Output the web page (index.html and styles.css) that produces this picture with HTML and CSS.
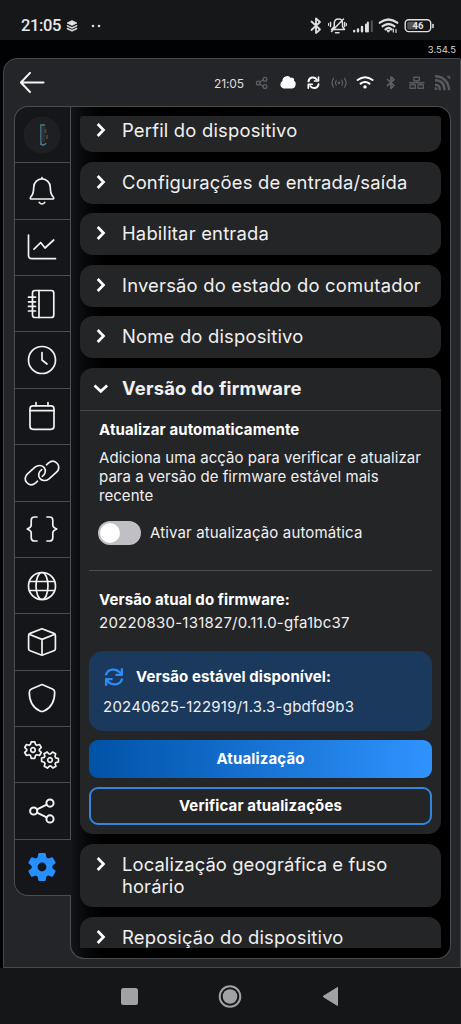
FILE: index.html
```html
<!DOCTYPE html>
<html lang="pt">
<head>
<meta charset="utf-8">
<title>Definições do dispositivo</title>
<link rel="stylesheet" href="styles.css">
</head>
<body>
<div class="phone">
  <header class="status">
    <span class="status-time">21:05</span>
    <svg class="layers" width="12" height="12" viewBox="0 0 12 12"><path d="M6 .6 11 3 6 5.400 1 3z M1 5.300 6 7.500 11 5.300 11 6 6 8.400 1 6z M1 8 6 10.200 11 8 11 8.900 6 11.300 1 8.900z" fill="#e4e4e4" stroke="#e4e4e4" stroke-width=".7" stroke-linejoin="round"/></svg>
    <svg class="dots" width="12" height="4" viewBox="0 0 12 4"><circle cx="2" cy="2" r="1.300" fill="#ddd"/><circle cx="8" cy="2" r="1.300" fill="#ddd"/></svg>
    <svg class="status-icons" width="130" height="20" viewBox="308 16 130 20" fill="none" stroke="#dedede" stroke-linecap="round" stroke-linejoin="round">
      <path d="M311.500 21.500 320 29.500 316 33V18.500l4 3.500-8.500 8" stroke-width="1.800"/>
      <path d="M331.500 29.500h13l-2-3v-3.500c0-5.500-8-5.500-8.200 0v3.500zM335.500 32.800h3.500M331.500 31.500 343.500 19M330.500 22.500v4M344.700 22.500v4" stroke-width="1.500"/>
      <path d="M328.500 23.500v2M346.500 23.500v2" stroke-width="1"/>
      <path d="M354.200 31v.200M358 29.500v1.800M362 27v4.300M366.200 24.800v6.500" stroke-width="2.400"/><path d="M367.900 22.500v9" stroke-width="2"/><path d="M371.800 20.500v11.500" stroke="#555" stroke-width="2" stroke-linecap="butt"/>
      <path d="M379.800 22.700q8.700-6.500 17.400 0M382.700 26.200q5.800-4.500 11.600 0M385.500 29.300q3-2.500 6 0" stroke-width="2.300"/>
      <path d="M387.300 30.500h2.600l-1.300 1.500z" fill="#dedede" stroke-width="1"/>
      <path d="M393.300 32v-3M396 29.500v3" stroke-width="1.200"/>
      <rect x="405.200" y="19.800" width="25.500" height="11.800" rx="3.500" stroke-width="1.400"/>
      <rect x="407.300" y="21.800" width="10" height="7.800" rx="1.500" fill="#555" stroke="none"/>
      <path d="M433 24.500v3" stroke-width="1.600"/>
      <text x="418" y="29" text-anchor="middle" class="battery">46</text>
    </svg>
  </header>
  <div class="version">3.54.5</div>

  <main class="panel">
    <div class="topbar">
      <svg width="26" height="22" viewBox="0 0 26 22" fill="none" stroke="#f5f5f5" stroke-width="2" stroke-linecap="round" stroke-linejoin="round"><path d="M23.500 10.500H.9M10 .9.900 10.500 10 20"/></svg>
      <div class="indicators">
        <span class="clock">21:05</span>
        <svg width="198" height="20" viewBox="254 73 198 20" fill="none" stroke-linecap="round" stroke-linejoin="round">
          <g stroke="#5f6063" stroke-width="1.300"><path d="m259.500 82 4-2.200M259.500 84l4 2.200"/><circle cx="258.300" cy="83" r="1.900"/><circle cx="265" cy="79.200" r="1.900"/><circle cx="265" cy="86.500" r="1.900"/></g>
          <path d="M283.400 88.500a4 4 0 0 1-1-7.400 4.800 4.800 0 0 1 8.500-3.200c2.600-.8 3.800 1.500 3 2.800 2.700.8 2.600 7.300-1.600 7.800z" fill="#fff"/>
          <g stroke="#fff" stroke-width="2"><path d="M308.500 81.300c.7-4.300 6-5 8.200-1.800M318.500 84.300c-.7 4.200-6 5-8.300 1.700"/><path d="M318.500 77v4h-4M308.300 88.300v-4h4" stroke-width="1.600"/></g>
          <g stroke="#606164" stroke-width="1.200"><path d="M336.300 80.200q-1.600 2.500 0 5M341.800 80.200q1.600 2.500 0 5M333.500 78.300q-2.900 4.400 0 8.800M344.600 78.300q2.900 4.400 0 8.800"/><circle cx="339" cy="82.700" r=".7" fill="#606164"/></g>
          <path d="M357.600 80q7.500-5.500 15 0M360.600 83.600q4.400-3.200 8.900 0" stroke="#fff" stroke-width="2"/><circle cx="365" cy="86.900" r="1.700" fill="#fff"/>
          <path d="M387.500 79.500 394 85.500 391 88.300V77l3 2.700-6.500 6" stroke="#5f6063" stroke-width="1.700"/>
          <g stroke="#58595c" stroke-width="1.400"><rect x="413.800" y="77.200" width="5.500" height="3.500"/><rect x="410" y="84.700" width="5.300" height="3.500"/><rect x="418" y="84.700" width="5.300" height="3.500"/><path d="M416.600 80.700v2M409.500 82.700h14.500M412.600 82.700v2M420.600 82.700v2"/></g>
          <g stroke="#58595c" stroke-width="2.400" stroke-linecap="butt"><path d="M435 84.800c4 0 5 2.500 5 5.500M435 80.300c6.500 0 9.500 4 9.500 10M435 76.300c8 0 14 5.500 14 14"/><path d="M435 89.500v-2.200q2 0 2.300 2.300zM447 76.200h2.800V79z" fill="#58595c" stroke-width=".8"/></g>
        </svg>
      </div>
    </div>

    <div class="workspace">
      <nav class="sidebar">
        <div class="tab"><svg width="38" height="38" viewBox="-19 -19 38 38"><circle r="18.500" fill="#1e1f22"/><path d="M3-10h-4V10" fill="none" stroke="#3c6674" stroke-width="2"/><path d="M1.500-8.500V7" stroke="#2b2f34" stroke-width="4"/><path d="M3.500-6V-2M5 0V4" stroke="#5d4438" stroke-width="1.500"/><path d="M-1 9q3 2.500 5-1" fill="none" stroke="#4b8296" stroke-width="1.500"/></svg></div>
        <div class="tab"><svg class="icon" viewBox="-18 -18 36 36"><path d="M-10.500 8H10.500c2.200 0 .8-2 .1-2.900C8.700 2.800 8.300 0 8.300-3.800a8.300 8.300 0 0 0-16.600 0C-8.300 0-8.700 2.800-10.600 5.100-11.300 6-12.700 8-10.500 8zM0-12.100v-1.300M-2.700 11.500q2.700 3 5.400 0"/></svg></div>
        <div class="tab"><svg class="icon" viewBox="-18 -18 36 36"><path d="M-13.500-12V8.200q0 3.500 3.500 3.500H13.500M-8 2.200-1.300-4.500 3 1 11.700-7"/></svg></div>
        <div class="tab"><svg class="icon" viewBox="-18 -18 36 36"><rect x="-9.500" y="-13.500" width="21.300" height="27" rx="2.500"/><path d="M-3-13.500v27M-13.500-6.800h7M-13.500-2.200h7M-13.500 2.400h7M-13.500 7h7"/></svg></div>
        <div class="tab"><svg class="icon" viewBox="-18 -18 36 36"><circle r="13.500"/><path d="M0-7.500V0l5 4"/></svg></div>
        <div class="tab"><svg class="icon" viewBox="-18 -18 36 36"><rect x="-12" y="-10.200" width="24" height="23.500" rx="3"/><path d="M-12-5.300h24M-6-13.500v3.300M6-13.500v3.300"/></svg></div>
        <div class="tab"><svg class="icon" viewBox="-18 -18 36 36"><path id="chain" d="M-4.500 8.200-6.300 9.800C-9.500 12.500-13 12-15.300 9.500S-17.200 3.200-14.500.8L-7-5.800C-4-8.300.3-8 2.300-5.200S3.300 1.300.3 3.400"/><use href="#chain" transform="rotate(180)"/></svg></div>
        <div class="tab"><svg class="icon" viewBox="-18 -18 36 36"><path d="M-5-12H-7.500q-3.300 0-3.300 3.300V-4q0 2.500-4 4 4 1.500 4 4v4.700q0 3.300 3.300 3.300H-5M5-12H7.500q3.300 0 3.300 3.300V-4q0 2.500 4 4-4 1.500-4 4v4.700q0 3.300-3.300 3.300H5"/></svg></div>
        <div class="tab"><svg class="icon" viewBox="-18 -18 36 36"><circle r="13.500"/><ellipse rx="6" ry="13.500"/><path d="M-12.600-4.500h25.200M-12.600 4.500h25.200"/></svg></div>
        <div class="tab"><svg class="icon" viewBox="-18 -18 36 36"><path d="M0-13.300 11.900-8.600q1.500.6 1.500 2V6.800q0 1.400-1.500 2L0 13.300-11.900 8.800q-1.500-.6-1.500-2V-6.600q0-1.400 1.500-2zM-13-7.800 0-2.600 13-7.800M0-2.600V13"/></svg></div>
        <div class="tab"><svg class="icon" viewBox="-18 -18 36 36"><path d="M0-13.500 10.500-9q2.200 1 2.200 3.200C12.700 3 8.500 10 2 13q-2 1-4 0C-8.500 10-12.700 3-12.700-5.800q0-2.200 2.200-3.200z"/></svg></div>
        <div class="tab"><svg class="icon" viewBox="-18 -18 36 36">
          <g transform="translate(-9 -5)"><path id="cog" d="M-1.800-8.200h3.600l.7 2.600 1.400.9 2.600-.8 1.800 3-2 1.900v1.300l2 1.800-1.800 3-2.600-.7-1.400.8-.7 2.700h-3.600l-.7-2.700-1.400-.8-2.600.7-1.800-3 2-1.800v-1.300l-2-1.900 1.800-3 2.600.8 1.400-.9z"/><circle r="2.300"/></g>
          <g transform="translate(8 5) rotate(30)"><use href="#cog"/><circle r="2.300"/></g></svg></div>
        <div class="tab"><svg class="icon bold" viewBox="-18 -18 36 36"><circle cx="-8.300" cy="0" r="3.600"/><circle cx="8" cy="-7.900" r="3.600"/><circle cx="8" cy="7.900" r="3.600"/><path d="m-5-1.600 9.700-4.700M-5 1.600l9.700 4.700"/></svg></div>
        <div class="tab active"><svg width="36" height="36" viewBox="-18 -18 36 36"><path fill="#258ffd" stroke="#258ffd" stroke-width="2" stroke-linejoin="round" fill-rule="evenodd" d="M-2.700-13h5.400l.9 4.200 2.300 1.400 4.200-1.300 2.500 4.500L9.300-1.400v2.800l3.300 2.800-2.500 4.500-4.200-1.300-2.300 1.400-.9 4.200h-5.400l-.9-4.200-2.300-1.400-4.200 1.300-2.500-4.500 3.300-2.800v-2.800l-3.300-2.800 2.500-4.500 4.200 1.300 2.300-1.400zM0-5.400a5.400 5.400 0 1 0 0 10.800 5.400 5.400 0 0 0 0-10.800z"/></svg></div>
      </nav>

      <section class="content">
        <div class="list">
          <article class="card cut"><h2><svg class="chev" viewBox="0 0 16 16"><path d="m4.700 2 5.800 6-5.800 6"/></svg>Perfil do dispositivo</h2></article>
          <article class="card"><h2><svg class="chev" viewBox="0 0 16 16"><path d="m4.700 2 5.800 6-5.800 6"/></svg>Configurações de entrada/saída</h2></article>
          <article class="card"><h2><svg class="chev" viewBox="0 0 16 16"><path d="m4.700 2 5.800 6-5.800 6"/></svg>Habilitar entrada</h2></article>
          <article class="card"><h2><svg class="chev" viewBox="0 0 16 16"><path d="m4.700 2 5.800 6-5.800 6"/></svg>Inversão do estado do comutador</h2></article>
          <article class="card"><h2><svg class="chev" viewBox="0 0 16 16"><path d="m4.700 2 5.800 6-5.800 6"/></svg>Nome do dispositivo</h2></article>
          <article class="card open">
            <h2><svg class="chev" viewBox="0 0 16 16"><path d="m1.500 5.500 6.300 5.800 6.300-5.800"/></svg>Versão do firmware</h2>
            <div class="body">
              <div class="auto">
                <h3>Atualizar automaticamente</h3>
                <p>Adiciona uma acção para verificar e atualizar<br>para a versão de firmware estável mais<br>recente</p>
                <div class="switch-row"><span class="switch"></span><span>Ativar atualização automática</span></div>
              </div>
              <div class="current">
                <h3>Versão atual do firmware:</h3>
                <div class="ver">20220830-131827/0.11.0-gfa1bc37</div>
              </div>
              <div class="available">
                <div class="available-head">
                  <svg width="20" height="20" viewBox="0 0 20 20" fill="none" stroke="#2f8cf5" stroke-width="2.300" stroke-linejoin="round"><path d="M1.800 8.300C3.500 1.500 12 .5 17 6.500M18.200 11.500C16.500 18.500 8 19.500 3 13.500M17.900 1.300v6.500h-6.500M2.100 18.700v-6.500h6.500"/></svg>
                  <h3>Versão estável disponível:</h3>
                </div>
                <div class="ver">20240625-122919/1.3.3-gbdfd9b3</div>
              </div>
              <button class="btn primary">Atualização</button>
              <button class="btn outline">Verificar atualizações</button>
            </div>
          </article>
          <article class="card tall"><h2><svg class="chev" viewBox="0 0 16 16"><path d="m4.700 2 5.800 6-5.800 6"/></svg>Localização geográfica e fuso<br>horário</h2></article>
          <article class="card"><h2><svg class="chev" viewBox="0 0 16 16"><path d="m4.700 2 5.800 6-5.800 6"/></svg>Reposição do dispositivo</h2></article>
        </div>
      </section>
    </div>
  </main>

  <footer class="android-nav">
    <svg width="461" height="56" viewBox="0 968 461 56"><rect x="121" y="988" width="17" height="17" rx="2.500" fill="#a1a2a3"/><circle cx="230" cy="996.500" r="10.300" fill="none" stroke="#a1a2a3" stroke-width="2"/><circle cx="230" cy="996.500" r="7.300" fill="#a1a2a3"/><path d="M337.500 987.500v18l-14.500-9z" fill="#a1a2a3" stroke="#a1a2a3" stroke-linejoin="round"/></svg>
  </footer>
</div>
</body>
</html>
```
FILE: styles.css
```css
* { box-sizing: border-box; }
body { margin: 0; background: #000; color: #f0f0f0; font-family: Inter, "Noto Sans", sans-serif; }
h2, h3, p { margin: 0; }
.phone { width: 461px; height: 1024px; display: flex; flex-direction: column; overflow: hidden; background: #010204; }

.status { height: 40px; flex: none; background: #161719; display: flex; align-items: center; padding: 12px 23px 0 21px; }
.status-time { font: 500 16.5px/20px Roboto, sans-serif; letter-spacing: -.35px; color: #e8e8e8; width: 45px; white-space: nowrap; }
.dots { margin-left: 13px; }
.status-icons { margin-left: auto; }
.battery { font: 700 9.500px Roboto, sans-serif; fill: #e4e4e4; stroke: none; }
.version { height: 18px; flex: none; padding-right: 5px; text-align: right; font-size: 9.500px; line-height: 19px; color: #d5d5d5; }

.panel { height: 910px; flex: none; margin-left: 3px; padding: 0 9px 0 10px; background: #242528; border: 1px solid #47484b; border-radius: 14px 2px 0 0; }
.topbar { height: 47px; display: flex; align-items: center; justify-content: space-between; padding: 1px 0 0 6px; }
.indicators { display: flex; align-items: center; margin-right: -1px; }
.clock { font-size: 12px; letter-spacing: -.1px; color: #dedede; width: 40px; }

.workspace { display: flex; height: 853px; }
.sidebar { width: 57px; height: 790px; flex: none; display: flex; flex-direction: column; border: 1px solid #4b4c50; border-right: 0; border-radius: 14px 0 0 14px; overflow: hidden; background: #15161a; }
.tab { flex: 1 1 0; display: flex; align-items: center; justify-content: center; padding-right: 1px; border-bottom: 1px solid #4b4c50; border-right: 1px solid #4b4c50; }
.tab.active { border: 0; padding-right: 2px; }
.icon { width: 36px; height: 36px; fill: none; stroke: #f2f2f2; stroke-width: 1.700; stroke-linecap: round; stroke-linejoin: round; overflow: visible; }
.icon.bold { stroke-width: 2; }

.content { flex: 1; padding: 9px; border: 1px solid #4b4c50; border-left: 0; border-radius: 0 14px 14px 14px; background: linear-gradient(90deg, #131518 0, #070809 14px, #000 34px); position: relative; }
.content::after { content: ""; position: absolute; left: -1px; bottom: -1px; width: 14px; height: 63px; border-left: 1px solid #4b4c50; border-bottom: 1px solid #4b4c50; border-radius: 0 0 0 14px; }
.list { height: 832px; overflow: hidden; display: flex; flex-direction: column; gap: 9.600px; }
.card { flex: none; height: 42px; border-radius: 13px; background: #242527; }
.card h2 { height: 42px; display: flex; align-items: center; padding: 0 0 2px 42px; position: relative; font-size: 18.400px; font-weight: 400; line-height: 22px; letter-spacing: .2px; white-space: nowrap; }
.chev { position: absolute; left: 13px; top: 12px; width: 16px; height: 16px; fill: none; stroke: #fff; stroke-width: 2.700; }
.cut { height: 36px; border-radius: 3px 3px 13px 13px; }
.cut h2 { height: 30px; }
.cut .chev { top: 6px; }
.card.tall { height: 63.500px; }
.card.tall h2 { height: 64px; letter-spacing: .1px; }
.card.open { height: 466px; }
.card.open h2 { font-weight: 700; border-bottom: 1px solid #45464a; height: 43px; }
.body { padding: 9px 9px 0; display: flex; flex-direction: column; }
h3 { font-size: 15px; line-height: 20px; font-weight: 700; letter-spacing: .1px; color: #fff; white-space: nowrap; }
.auto { height: 151px; padding-left: 10px; border-bottom: 1px solid #4a4b4f; }
.auto p { margin-top: 9px; font-size: 15px; line-height: 18.800px; letter-spacing: .05px; white-space: nowrap; }
.switch-row { display: flex; align-items: center; gap: 9px; margin: 16px 0 0 -1px; font-size: 15px; line-height: 24px; letter-spacing: .14px; white-space: nowrap; }
.switch { width: 43px; height: 24px; border-radius: 12px; background: #bfbfc4; padding: 2px; flex: none; }
.switch::before { content: ""; display: block; width: 20px; height: 20px; border-radius: 50%; background: #fff; }
.current { padding: 19px 0 0 10px; height: 80px; }
.ver { font-size: 15px; line-height: 20px; letter-spacing: .23px; white-space: nowrap; }
.current .ver { margin-top: 3px; }
.available { height: 80px; border-radius: 14px; background: #1b395c; padding: 16px 15px; }
.available-head { display: flex; gap: 12px; align-items: center; }
.available .ver { margin: 10px 0 0 -1px; }
.btn { height: 38px; border: 0; border-radius: 9px; color: #fff; font: 700 15px/20px Inter, sans-serif; letter-spacing: .14px; padding: 0; margin-top: 9px; }
.primary { background: linear-gradient(90deg, #0052a6, #2f93ff); }
.outline { background: #242527; border: 2px solid #3187e0; }
.android-nav { height: 56px; flex: none; background: #151618; }
.android-nav svg { display: block; }
```
